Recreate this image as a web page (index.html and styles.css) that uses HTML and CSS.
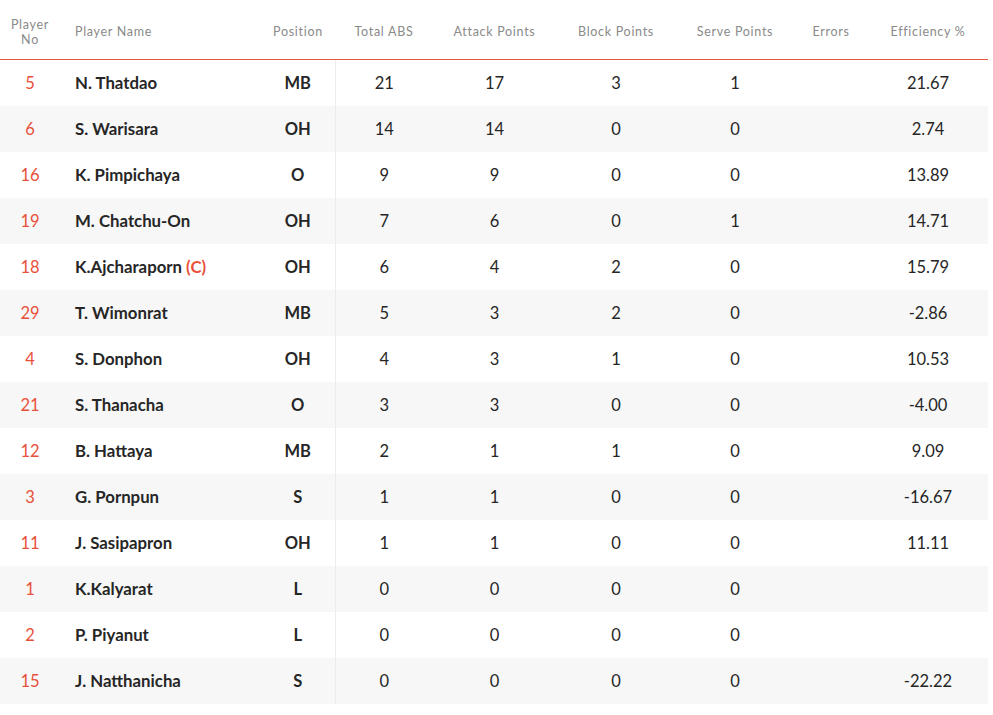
FILE: index.html
```html
<!DOCTYPE html>
<html lang="en">
<head>
<meta charset="utf-8">
<title>Player Stats</title>
<link rel="stylesheet" href="styles.css">
</head>
<body>
<table class="stats">
  <colgroup>
    <col class="c-no"><col class="c-name"><col class="c-pos"><col class="c-abs"><col class="c-att"><col class="c-blk"><col class="c-srv"><col class="c-err"><col class="c-eff">
  </colgroup>
  <thead>
    <tr>
      <th>Player<br>No</th>
      <th class="name">Player Name</th>
      <th>Position</th>
      <th>Total ABS</th>
      <th>Attack Points</th>
      <th>Block Points</th>
      <th>Serve Points</th>
      <th>Errors</th>
      <th>Efficiency %</th>
    </tr>
  </thead>
  <tbody>
    <tr><td class="no">5</td><td class="name">N. Thatdao</td><td class="pos">MB</td><td>21</td><td>17</td><td>3</td><td>1</td><td></td><td>21.67</td></tr>
    <tr><td class="no">6</td><td class="name">S. Warisara</td><td class="pos">OH</td><td>14</td><td>14</td><td>0</td><td>0</td><td></td><td>2.74</td></tr>
    <tr><td class="no">16</td><td class="name">K. Pimpichaya</td><td class="pos">O</td><td>9</td><td>9</td><td>0</td><td>0</td><td></td><td>13.89</td></tr>
    <tr><td class="no">19</td><td class="name">M. Chatchu-On</td><td class="pos">OH</td><td>7</td><td>6</td><td>0</td><td>1</td><td></td><td>14.71</td></tr>
    <tr><td class="no">18</td><td class="name">K.Ajcharaporn <span class="cap">(C)</span></td><td class="pos">OH</td><td>6</td><td>4</td><td>2</td><td>0</td><td></td><td>15.79</td></tr>
    <tr><td class="no">29</td><td class="name">T. Wimonrat</td><td class="pos">MB</td><td>5</td><td>3</td><td>2</td><td>0</td><td></td><td>-2.86</td></tr>
    <tr><td class="no">4</td><td class="name">S. Donphon</td><td class="pos">OH</td><td>4</td><td>3</td><td>1</td><td>0</td><td></td><td>10.53</td></tr>
    <tr><td class="no">21</td><td class="name">S. Thanacha</td><td class="pos">O</td><td>3</td><td>3</td><td>0</td><td>0</td><td></td><td>-4.00</td></tr>
    <tr><td class="no">12</td><td class="name">B. Hattaya</td><td class="pos">MB</td><td>2</td><td>1</td><td>1</td><td>0</td><td></td><td>9.09</td></tr>
    <tr><td class="no">3</td><td class="name">G. Pornpun</td><td class="pos">S</td><td>1</td><td>1</td><td>0</td><td>0</td><td></td><td>-16.67</td></tr>
    <tr><td class="no">11</td><td class="name">J. Sasipapron</td><td class="pos">OH</td><td>1</td><td>1</td><td>0</td><td>0</td><td></td><td>11.11</td></tr>
    <tr><td class="no">1</td><td class="name">K.Kalyarat</td><td class="pos">L</td><td>0</td><td>0</td><td>0</td><td>0</td><td></td><td></td></tr>
    <tr><td class="no">2</td><td class="name">P. Piyanut</td><td class="pos">L</td><td>0</td><td>0</td><td>0</td><td>0</td><td></td><td></td></tr>
    <tr><td class="no">15</td><td class="name">J. Natthanicha</td><td class="pos">S</td><td>0</td><td>0</td><td>0</td><td>0</td><td></td><td>-22.22</td></tr>
  </tbody>
</table>
</body>
</html>
```

FILE: styles.css
```css
html, body {
  margin: 0;
  padding: 0;
  background: #ffffff;
}

body {
  font-family: "Lato", "Liberation Sans", sans-serif;
  color: #222222;
}

.stats {
  width: 988px;
  border-collapse: collapse;
  table-layout: fixed;
}

.c-no { width: 60px; }
.c-name { width: 201px; }
.c-pos { width: 74px; }
.c-abs { width: 98px; }
.c-att { width: 123px; }
.c-blk { width: 120px; }
.c-srv { width: 118px; }
.c-err { width: 74px; }
.c-eff { width: 120px; }

.stats th {
  height: 55px;
  padding: 4px 0 0 0;
  font-weight: 400;
  font-size: 12.5px;
  line-height: 15px;
  letter-spacing: 0.7px;
  color: #8a8a8a;
  text-align: center;
  vertical-align: middle;
  border-bottom: 1px solid #e4583f;
}

.stats th.name {
  text-align: left;
  padding-left: 15px;
}

.stats td {
  height: 46px;
  padding: 0;
  font-size: 16.5px;
  line-height: 20px;
  text-align: center;
  vertical-align: middle;
  color: #262626;
}

.stats tbody tr:nth-child(even) td {
  background: #f7f7f7;
}

.stats td.no {
  color: #e8503a;
}

.stats td.name {
  text-align: left;
  padding-left: 15px;
  font-size: 16.8px;
  font-weight: 700;
}

.stats td.pos {
  font-weight: 700;
  border-right: 1px solid #ececec;
}

.cap {
  color: #e8503a;
}
```
